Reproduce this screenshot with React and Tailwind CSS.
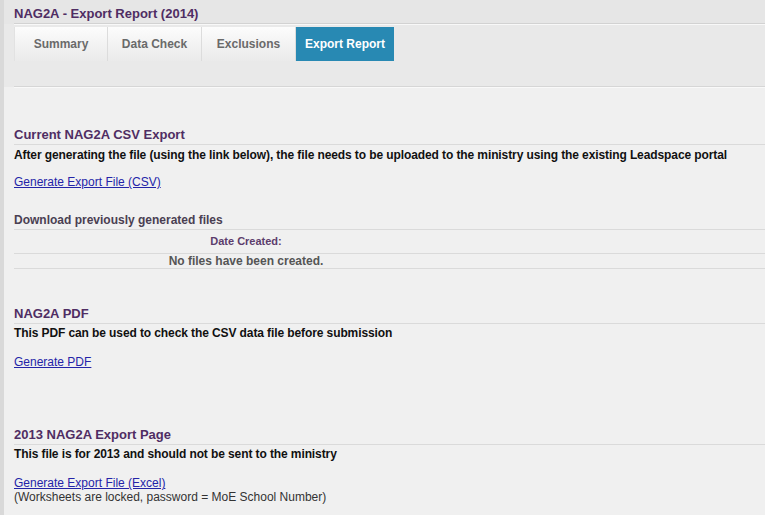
export default function App() {
  const tabs = [
    { label: "Summary", w: "w-[94px]" },
    { label: "Data Check", w: "w-[94px]" },
    { label: "Exclusions", w: "w-[94px]" },
  ];
  return (
    <div className="w-[765px] h-[515px] overflow-hidden bg-[#f0f0f0] border-l-4 border-[#d9d9d9] font-['Liberation_Sans',Arial,sans-serif]">
      {/* header */}
      <div className="bg-[#e6e6e6]">
        <div className="pl-[10px]">
          <div className="pt-[6px] leading-[16px] h-[24px] text-[13px] font-bold text-[#4f2d63] border-b border-[#d2d2d2]">
            NAG2A - Export Report (2014)
          </div>
        </div>
      </div>
      <div className="bg-[#e9e9e9] pl-[10px]">
        <div className="border-t border-[#f8f8f8] pt-[2px]">
          <div className="flex h-[34px]">
            {tabs.map((t, i) => (
              <div
                key={t.label}
                className={`${t.w} flex items-center justify-center text-[12px] font-bold text-[#6a6a6a] bg-gradient-to-b from-[#fcfcfc] to-[#eaeaea] border-r border-[#dcdcdc] ${i === 0 ? "border-l border-l-[#e2e2e2]" : ""}`}
              >
                {t.label}
              </div>
            ))}
            <div className="w-[98px] flex items-center justify-center text-[12px] font-bold text-white bg-[#2889b3]">
              Export Report
            </div>
          </div>
          <div className="h-[26px] border-b border-[#d6d6d6]"></div>
        </div>
      </div>
      <div className="pl-[10px]">
        <div className="h-px bg-[#f9f9f9]"></div>

        {/* Section 1 */}
        <div className="mt-[39px] leading-[16px] pb-px text-[13px] font-bold text-[#4f2d63] border-b border-[#dadada]">
          Current NAG2A CSV Export
        </div>
        <p className="mt-[2px] leading-[16px] text-[12px] font-bold tracking-[-0.1px] text-[#111]">
          After generating the file (using the link below), the file needs to be uploaded to the ministry using the existing Leadspace portal
        </p>
        <a href="#" className="block w-fit mt-[11px] leading-[16px] text-[12px] text-[#2424a8] underline">
          Generate Export File (CSV)
        </a>
        <div className="mt-[22px] leading-[16px] pb-px text-[12px] font-bold text-[#4a3f52] border-b border-[#dadada]">
          Download previously generated files
        </div>
        <div className="h-[24px] border-b border-[#dadada] flex items-center">
          <div className="w-[464px] text-center text-[11px] font-bold text-[#5c3d6c]">Date Created:</div>
        </div>
        <div className="h-[15px] border-b border-[#dadada] flex items-center">
          <div className="w-[464px] text-center text-[12px] leading-[14px] font-bold text-[#555]">No files have been created.</div>
        </div>

        {/* Section 2 */}
        <div className="mt-[37px] leading-[16px] pb-px text-[13px] font-bold text-[#4f2d63] border-b border-[#dadada]">
          NAG2A PDF
        </div>
        <p className="mt-[1px] leading-[16px] text-[12px] font-bold tracking-[-0.1px] text-[#111]">
          This PDF can be used to check the CSV data file before submission
        </p>
        <a href="#" className="block w-fit mt-[13px] leading-[16px] text-[12px] text-[#2424a8] underline">
          Generate PDF
        </a>

        {/* Section 3 */}
        <div className="mt-[57px] leading-[16px] pb-px text-[13px] font-bold text-[#4f2d63] border-b border-[#dadada]">
          2013 NAG2A Export Page
        </div>
        <p className="mt-[1px] leading-[16px] text-[12px] font-bold tracking-[-0.1px] text-[#111]">
          This file is for 2013 and should not be sent to the ministry
        </p>
        <a href="#" className="block w-fit mt-[14px] leading-[14px] text-[12px] text-[#2424a8] underline">
          Generate Export File (Excel)
        </a>
        <div className="leading-[14px] text-[12px] text-[#333]">
          (Worksheets are locked, password = MoE School Number)
        </div>
      </div>
    </div>
  );
}
